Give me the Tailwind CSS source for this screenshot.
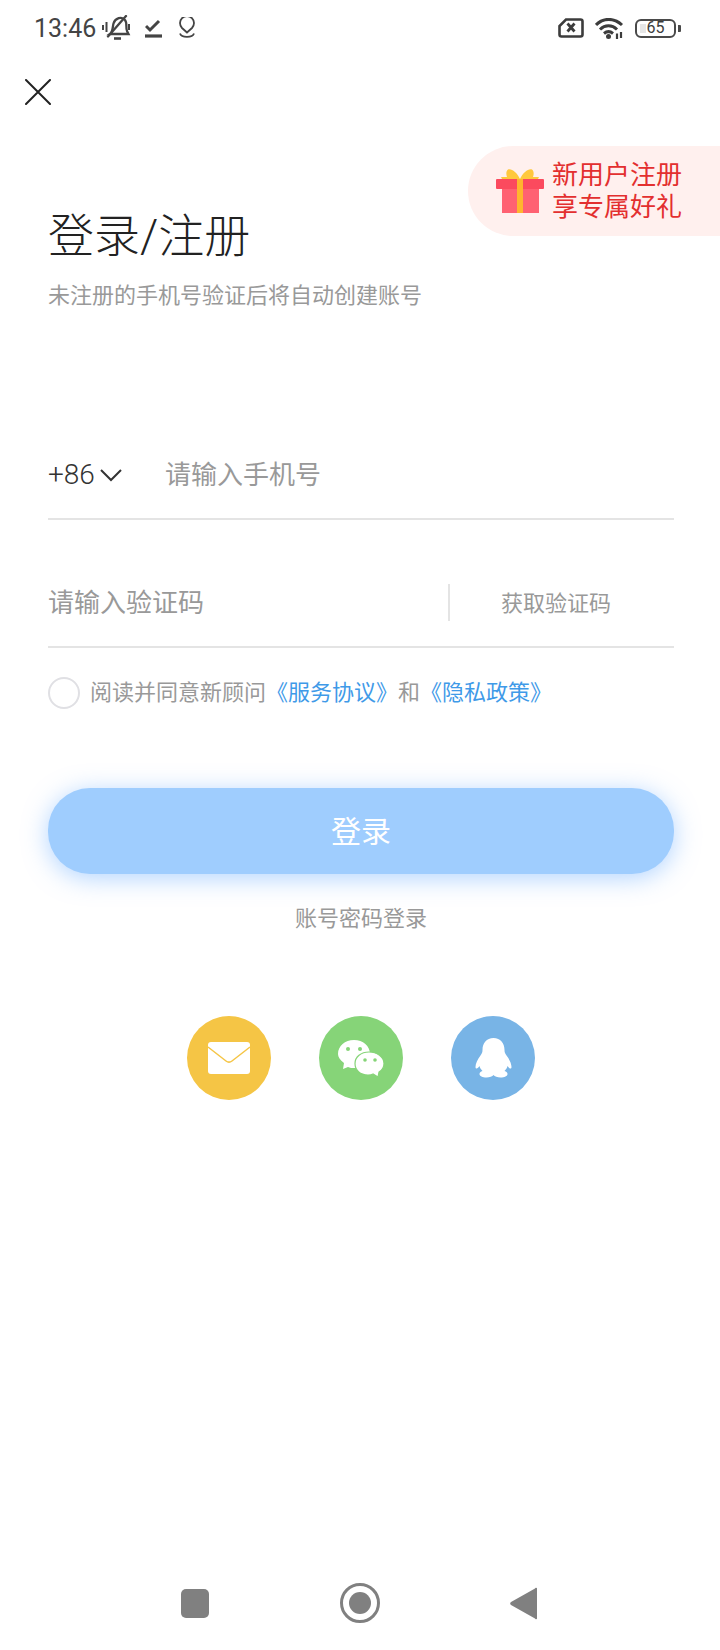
<!DOCTYPE html>
<html lang="zh-CN">
<head>
  <meta charset="UTF-8" />
  <meta name="viewport" content="width=device-width, initial-scale=1.0"/>
  <title>登录/注册</title>
  <script src="https://cdn.jsdelivr.net/npm/@tailwindcss/browser@4"></script>
</head>
<body class="bg-white">
  <div class="relative w-[720px] h-[1650px] flex flex-col overflow-hidden font-['Roboto','Noto_Sans_CJK_SC',sans-serif]">

    <!-- Status bar -->
    <div class="h-14 pl-[34px] pr-[39px] flex items-center justify-between text-[#444]">
      <div class="flex items-center">
        <span class="text-[25px] leading-none w-[68px]">13:46</span>
        <svg width="29" height="26" viewBox="0 0 29 26" fill="none" stroke="#444" stroke-width="2.300">
          <path d="M8 19c3-2 2.500-7 3.500-10.500C13 3 20 1 23 5c2.500 3 .5 8 2 11l1.500 3H8z"/>
          <path d="M12 23.500h7" stroke-width="2.600"/>
          <path d="M6 21.500 24 1" stroke-linecap="round"/>
          <path d="M1 10v5M4.500 7v10M27 9v6" stroke-width="2"/>
        </svg>
        <svg class="ml-[14px]" width="17" height="20" viewBox="0 0 17 20" fill="none" stroke="#444">
          <path d="M1 8l4 4 9-9" stroke-width="3"/>
          <path d="M0 18h17" stroke-width="3.200"/>
        </svg>
        <svg class="ml-[17px]" width="16" height="22" viewBox="0 0 16 22" fill="none" stroke="#444" stroke-width="1.800">
          <path d="M8 15.500 3 11A7 7 0 1 1 13 11z"/>
          <path d="M1 16.500c1.500 4.500 12.500 4.500 14 0"/>
        </svg>
      </div>
      <div class="flex items-center">
        <svg width="26" height="20" viewBox="0 0 26 20" fill="none" stroke="#3c3c3c">
          <path d="M8 1.500h14.500a2 2 0 0 1 2 2v13a2 2 0 0 1-2 2h-19a2 2 0 0 1-2-2V8z" stroke-width="2.600"/>
          <path d="M9.500 5.500l7 8M16.500 5.500l-7 8" stroke-width="2.800"/>
        </svg>
        <svg class="ml-[11px]" width="29" height="21" viewBox="0 0 29 21" fill="none" stroke="#3c3c3c" stroke-width="3">
          <path d="M1 7c7-7.500 18-7.500 26 0M5 11.500c5-5 12-5 17 0M9 15.500c3-2.500 6-2.500 9 0"/>
          <circle cx="13.500" cy="18.500" r="2.500" fill="#3c3c3c" stroke="none"/>
          <path d="M22 15.500v5.500M26 14v6" stroke-width="2.200"/>
        </svg>
        <div class="ml-[11px] w-[41px] h-[19px] border-2 border-[#4a4a4a] rounded-[6px] flex items-center justify-center relative">
          <div class="absolute left-[3px] top-[3px] bottom-[3px] w-[6px] bg-[#e6e6e6]"></div>
          <span class="relative text-[16px] leading-none text-[#3c3c3c]">65</span>
        </div>
        <div class="ml-[2px] w-[3px] h-[7px] bg-[#4a4a4a] rounded-r-[1px]"></div>
      </div>
    </div>

    <!-- Close -->
    <div class="mt-3 h-12 pl-[25px] flex items-center">
      <svg width="26" height="26" viewBox="0 0 26 26" stroke="#222" stroke-width="2" stroke-linecap="round">
        <path d="M1 1l24 24M25 1 1 25"/>
      </svg>
    </div>

    <!-- New user banner -->
    <div class="absolute right-0 top-[146px] w-[252px] h-[90px] pl-[28px] bg-[#fff0ee] rounded-l-[45px] flex items-center">
      <svg width="48" height="44" viewBox="0 0 48 44">
        <path d="M24 10C21 3 15-1 12 .5 10 2 10 5 11 8H5l1 2h36l1-2h-6c1-3 1-6-1-7.500C33-1 27 3 24 10z" fill="#ffc83d"/>
        <rect x="6" y="20" width="37" height="24" fill="#ff6172"/>
        <rect x="0" y="10" width="48" height="10" rx="1" fill="#fb4a5e"/>
        <rect x="21" y="10" width="6" height="34" fill="#ffb52e"/>
      </svg>
      <div class="ml-[8px] text-[26px] leading-[32px] text-[#e32f2f]">
        <p>新用户注册</p>
        <p>享专属好礼</p>
      </div>
    </div>

    <!-- Form -->
    <main class="pl-12 pr-[46px] flex flex-col">
      <h1 class="mt-[90px] text-[46px] leading-[60px] text-[#222] font-light">登录/注册</h1>
      <p class="mt-[15px] text-[22px] leading-[30px] text-[#999]">未注册的手机号验证后将自动创建账号</p>

      <div class="mt-[121px] h-[88px] border-b-2 border-[#e4e4e4] flex items-center">
        <span class="w-[117px] flex items-center text-[28px] text-[#333] font-light">
          +86
          <svg class="ml-[5px]" width="22" height="13" viewBox="0 0 22 13" fill="none" stroke="#333" stroke-width="2">
            <path d="M1 1l10 10L21 1"/>
          </svg>
        </span>
        <input class="flex-1 outline-none text-[26px] placeholder:text-[#999]" placeholder="请输入手机号" />
      </div>

      <div class="mt-[40px] h-[88px] border-b-2 border-[#e4e4e4] flex items-center">
        <input class="flex-1 min-w-0 outline-none text-[26px] placeholder:text-[#999]" placeholder="请输入验证码" />
        <div class="w-[2px] h-[37px] mb-[2px] bg-[#e4e4e4]"></div>
        <span class="w-[224px] pl-[51px] text-[22px] text-[#999]">获取验证码</span>
      </div>

      <div class="mt-[29px] flex items-center text-[22px] leading-8 text-[#999]">
        <span class="w-8 h-8 rounded-full border-2 border-[#e0e0e4] shrink-0"></span>
        <p class="ml-[10px]">阅读并同意新顾问<span class="text-[#3f9ae8]">《服务协议》</span>和<span class="text-[#3f9ae8]">《隐私政策》</span></p>
      </div>

      <button class="mt-[79px] h-[86px] rounded-[42px] bg-[#9fcdfe] text-white text-[30px] shadow-[0_4px_24px_rgba(100,170,255,0.5)]">登录</button>

      <p class="mt-[30px] text-center text-[22px] leading-[30px] text-[#999]">账号密码登录</p>

      <div class="mt-[82px] flex justify-center gap-12">
        <div class="w-[84px] h-[84px] rounded-full bg-[#f5c545]">
          <svg width="84" height="84" viewBox="0 0 84 84">
            <rect x="21" y="26" width="42" height="32" rx="3" fill="#fff"/>
            <path d="M21 31 39 45c2 1.500 4 1.500 6 0L63 31" fill="none" stroke="#f5c545" stroke-width="1.500"/>
          </svg>
        </div>
        <div class="w-[84px] h-[84px] rounded-full bg-[#86d478]">
          <svg width="84" height="84" viewBox="0 0 84 84">
            <path d="M24 53l1-6c-4-3-6-6-6-9 0-8 7-14 16-14s16 6 16 14-7 14-16 14c-2 0-4 0-6-1z" fill="#fff"/>
            <circle cx="29" cy="33" r="2" fill="#86d478"/>
            <circle cx="41" cy="33" r="2" fill="#86d478"/>
            <path d="M59 61l-5-3c-2 1-3 1-5 1-8 0-13-5-13-11.500S42 36 50 36s15 5 15 11.500c0 3-1 6-5 8.500z" fill="#fff" stroke="#86d478" stroke-width="1.200"/>
            <circle cx="46" cy="44" r="1.800" fill="#86d478"/>
            <circle cx="56" cy="44" r="1.800" fill="#86d478"/>
          </svg>
        </div>
        <div class="w-[84px] h-[84px] rounded-full bg-[#78b4e6]">
          <svg width="84" height="84" viewBox="0 0 84 84">
            <path fill="#fff" d="M42.500 22c-7 0-11 5-11 12 0 2-.5 3.500-2 5.500-3 4-5 8-5 11.500 0 1 .5 1.500 1 1.500 1 0 2-1 3-2.500.5 2 1.500 3.500 3 5-2 .5-3 1.500-3 3 0 2 3 3.500 7 3.500 3 0 6-1 7-2.500 1 1.500 4 2.500 7 2.500 4 0 7-1.500 7-3.500 0-1.500-1-2.500-3-3 1.500-1.500 2.500-3 3-5 1 1.500 2 2.500 3 2.500.5 0 1-.5 1-1.500 0-3.500-2-7.500-5-11.500-1.500-2-2-3.500-2-5.500 0-7-4-12-11-12z"/>
          </svg>
        </div>
      </div>
    </main>

    <!-- Navigation bar -->
    <div class="mt-auto h-[94px]">
      <div class="flex items-center justify-between pl-[181px] pr-[183px] h-full">
        <div class="w-[28px] h-[29px] rounded-[5px] bg-[#808080]"></div>
        <div class="w-[40px] h-[40px] rounded-full border-[3px] border-[#808080] flex items-center justify-center">
          <div class="w-[22px] h-[22px] rounded-full bg-[#808080]"></div>
        </div>
        <svg width="27" height="33" viewBox="0 0 27 33">
          <path d="M25 1.500a1 1 0 0 1 2 .5v29a1 1 0 0 1-2 .5L1 18a2 2 0 0 1 0-3z" fill="#808080"/>
        </svg>
      </div>
    </div>
  </div>
</body>
</html>
